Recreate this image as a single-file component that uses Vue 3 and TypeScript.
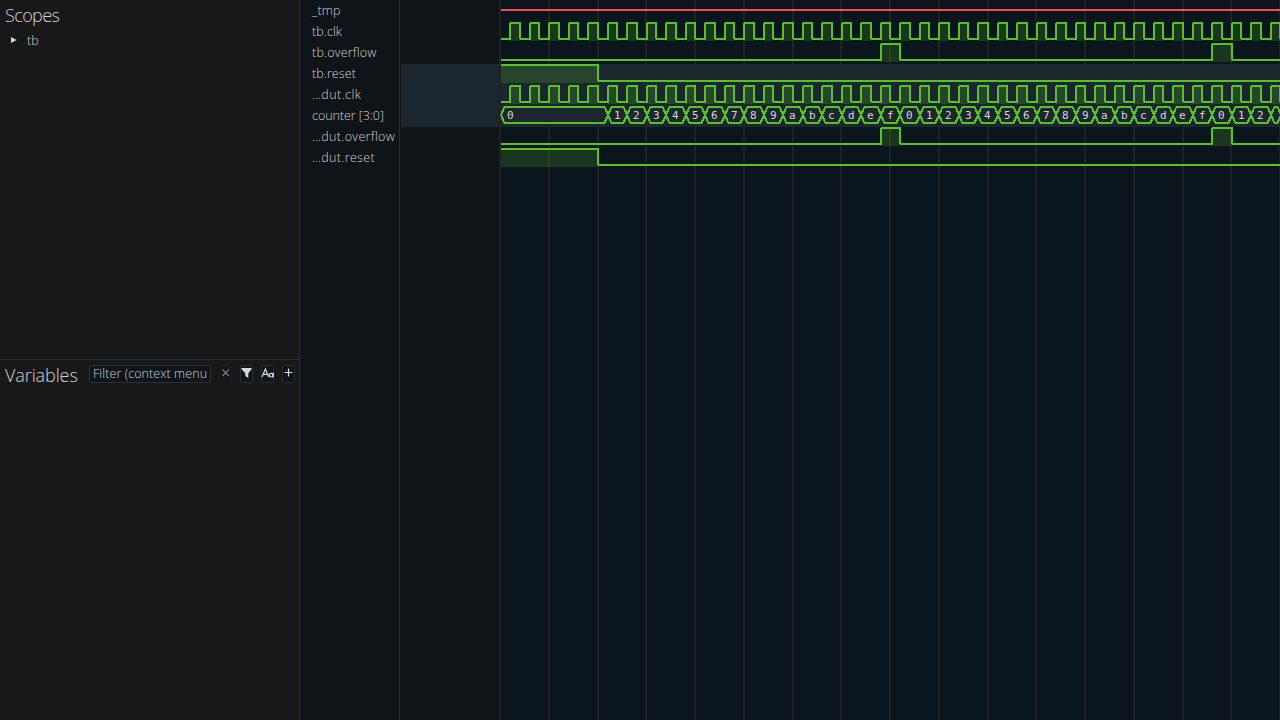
<script setup lang="ts">
interface Signal {
  name: string
  kind: 'clock' | 'bit' | 'bus' | 'undef'
  pulses?: [number, number][]
  selected?: boolean
  spacing: number
}

const HALF = 9.75
const ROW = 21
const END = 782

const overflow: [number, number][] = [[39, 41], [73, 75]]
const signals: Signal[] = [
  { name: '_tmp', kind: 'undef', spacing: 0.25 },
  { name: 'tb.clk', kind: 'clock', spacing: 0.1 },
  { name: 'tb.overflow', kind: 'bit', pulses: overflow, spacing: 0.2 },
  { name: 'tb.reset', kind: 'bit', pulses: [[0, 10]], selected: true, spacing: 0.1 },
  { name: '…dut.clk', kind: 'clock', selected: true, spacing: 0.42 },
  { name: 'counter [3:0]', kind: 'bus', selected: true, spacing: -0.04 },
  { name: '…dut.overflow', kind: 'bit', pulses: overflow, spacing: 0.34 },
  { name: '…dut.reset', kind: 'bit', pulses: [[0, 10]], spacing: 0.35 },
]

// The canvas begins at x = 499, half a grid line before time zero.
const at = (k: number) => (k === 0 ? 2 : Math.round(500.3 + k * HALF) - 499)
const grid = Array.from({ length: 17 }, (_, i) => Math.round(500.2 + i * 48.75) - 499)
const clockPulses: [number, number][] = Array.from({ length: 40 }, (_, i) => [2 * i + 1, 2 * i + 2])

const pulsesOf = (s: Signal) => (s.kind === 'clock' ? clockPulses : s.pulses ?? [])
const high = (i: number) => 2 + i * ROW
const low = (i: number) => 18 + i * ROW

function tracePath(s: Signal, i: number): string {
  let d = `M2 ${low(i)}`
  for (const [a, b] of pulsesOf(s)) {
    d += a === 0 ? `M2 ${high(i)}` : `H${at(a)}V${high(i)}`
    d += `H${at(b)}V${low(i)}`
  }
  return `${d}H${END}`
}

interface Cell { d: string; x: number; text: string }
const cells: Cell[] = []
const top = high(5)
const mid = top + 8
const bottom = low(5)
function addCell(a: number, b: number, text: string, x: number) {
  cells.push({
    d: `M${a} ${mid}L${a + 3.5} ${top}H${b - 3.5}L${b} ${mid}L${b - 3.5} ${bottom}H${a + 3.5}Z`,
    x,
    text,
  })
}
addCell(2, at(11), '0', 11.3)
for (let k = 0; k < 34; k++) {
  const a = at(11 + 2 * k)
  const b = at(13 + 2 * k)
  addCell(a, b, ((k + 1) % 16).toString(16), Math.floor((a + b) / 2 - 0.1) + 0.3)
}
addCell(at(79), 782, '', 0)
</script>

<template>
  <div class="app">
    <aside class="sidebar">
      <section class="scopes">
        <h2 class="heading scopes-title">Scopes</h2>
        <div class="tree-row">
          <svg width="7" height="8" viewBox="0 0 7 8"><path d="M1 1L6.5 4L1 7Z" fill="#dcdcdc" /></svg>
          <span>tb</span>
        </div>
      </section>
      <section class="variables">
        <h2 class="heading variables-title">Variables</h2>
        <div class="filter"><span>Filter (context menu</span></div>
        <button class="tool clear">
          <svg width="12" height="16" viewBox="0 0 12 16"><path d="M2.5 3.5L9 10M9 3.5L2.5 10" stroke="#7c7f80" stroke-width="1.1" /></svg>
        </button>
        <button class="tool funnel">
          <svg width="12" height="16" viewBox="0 0 12 16"><path d="M0.5 2H10.5V3.2L7.3 7.3V12L4.3 10V7.3L0.5 3.2Z" fill="#d8d8d8" /></svg>
        </button>
        <button class="tool case">
          <svg width="14" height="16" viewBox="0 0 14 16" fill="none" stroke="#dadada" stroke-width="1.2">
            <path d="M1 11L4.4 3L7.8 11M2.2 8.3H6.8" />
            <circle cx="10.2" cy="9.2" r="1.8" /><path d="M12.3 6.8V11.4" />
          </svg>
        </button>
        <button class="tool add">
          <svg width="12" height="16" viewBox="0 0 12 16"><path d="M1.5 6.5H9.5M5.5 2.5V10.5" stroke="#e0e0e0" stroke-width="1.2" /></svg>
        </button>
      </section>
    </aside>

    <div class="names">
      <div v-for="s in signals" :key="s.name" class="name" :style="{ letterSpacing: s.spacing + 'px' }">{{ s.name }}</div>
    </div>

    <div class="values">
      <div v-for="s in signals" :key="s.name" class="value" :class="{ selected: s.selected }"></div>
    </div>

    <svg class="waves" width="781" height="720" viewBox="0 0 781 720">
      <rect v-for="x in grid" :key="x" :x="x - 1" y="0" width="2" height="720" fill="#23211f" />
      <rect x="2" y="64" width="779" height="63" class="selection" />
      <path d="M2 10H782" class="undef" />
      <template v-for="(s, i) in signals" :key="s.name">
        <g v-if="s.kind === 'clock' || s.kind === 'bit'">
          <rect
            v-for="p in pulsesOf(s)"
            :key="p[0]"
            :x="at(p[0])"
            :y="high(i)"
            :width="at(p[1]) - at(p[0])"
            height="18"
            class="fill"
          />
          <path :d="tracePath(s, i)" class="trace" />
        </g>
      </template>
      <g v-for="c in cells" :key="c.d">
        <path :d="c.d" class="trace" />
        <text :x="c.x" :y="mid + 4" class="digit">{{ c.text }}</text>
      </g>
    </svg>
  </div>
</template>

<style>
html, body { background: #181818; overflow: hidden; }
</style>

<style scoped>
.app {
  display: flex;
  width: 1280px;
  height: 720px;
  overflow: hidden;
  background: #181818;
  color: #d2d3d3;
  font-family: "Open Sans", "Noto Sans", sans-serif;
  font-weight: 300;
  font-size: 12.5px;
}
.sidebar {
  box-sizing: border-box;
  width: 300px;
  border-right: 1px solid #2c2f31;
  display: flex;
  flex-direction: column;
}
.scopes {
  box-sizing: border-box;
  height: 360px;
  border-bottom: 1px solid #2c2f31;
}
.heading {
  margin: 0;
  font-weight: 300;
  font-size: 18px;
  line-height: 24px;
  color: #d2d3d3;
}
.scopes-title { padding: 3px 0 0 5px; letter-spacing: -0.6px; }
.tree-row {
  display: flex;
  align-items: center;
  gap: 10px;
  height: 20px;
  margin-top: 3px;
  padding-left: 10px;
}
.variables { display: flex; align-items: flex-start; height: 360px; }
.variables-title { width: 84px; padding: 3px 0 0 5px; letter-spacing: -0.1px; }
.filter {
  box-sizing: border-box;
  width: 122px;
  height: 18px;
  margin-top: 5px;
  padding-left: 3px;
  border: 1px solid #2b3135;
  border-radius: 2px;
  background: #0e151b;
  line-height: 16px;
  letter-spacing: 0.08px;
  white-space: nowrap;
  overflow: hidden;
}
.tool {
  box-sizing: border-box;
  display: flex;
  justify-content: center;
  align-items: center;
  width: 13px;
  height: 18px;
  margin: 5px 0 0 8px;
  padding: 0;
  border: 1px solid #282d30;
  border-radius: 2px;
  background: #0e151b;
}
.tool svg { flex: none; }
.clear { border-color: #1c2023; background: #11161a; }
.names {
  box-sizing: border-box;
  width: 100px;
  padding-left: 12px;
  border-right: 1px solid #2c2f31;
  background: #0e1417;
}
.name { height: 21px; line-height: 21px; white-space: nowrap; }
.values { width: 99px; padding-top: 1px; background: #0e1417; }
.value { height: 21px; margin-left: 1px; }
.selected { background: #1c262f; }
.waves { display: block; background: #0b151d; }
.selection { fill: #1c262f; }
.undef { stroke: #f44d4d; stroke-width: 2; fill: none; }
.trace { stroke: #57c224; stroke-width: 2; fill: none; stroke-linejoin: bevel; shape-rendering: crispEdges; }
.fill { fill: #57c224; fill-opacity: 0.2; }
.digit {
  font-family: "DejaVu Sans Mono", monospace;
  font-weight: 400;
  font-size: 11px;
  fill: #d4d6d7;
  text-anchor: middle;
}
</style>
